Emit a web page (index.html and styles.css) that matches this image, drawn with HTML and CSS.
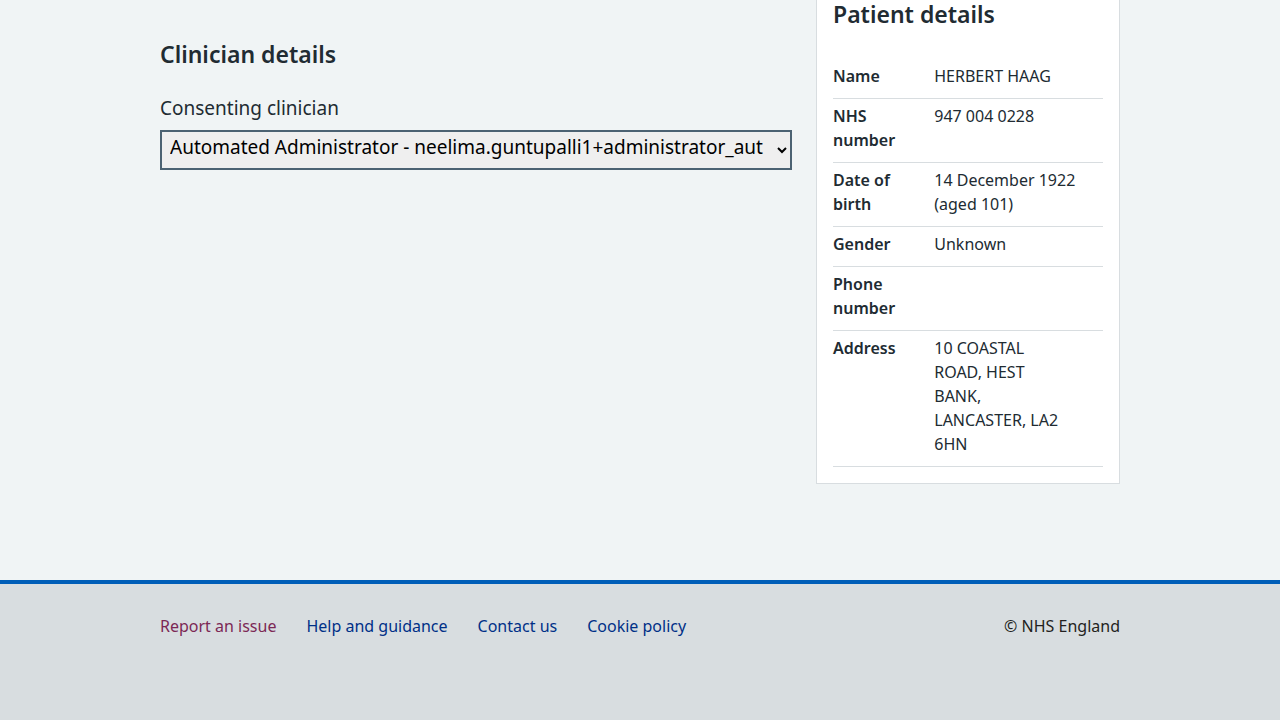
FILE: index.html
```html
<!DOCTYPE html>
<html lang="en">
<head>
<meta charset="utf-8">
<meta name="viewport" content="width=device-width, initial-scale=1">
<title>Clinician details</title>
<link rel="stylesheet" href="styles.css">
</head>
<body>
<main class="container main">
  <section class="clinician">
    <h2 class="heading">Clinician details</h2>
    <label class="label" for="clinician">Consenting clinician</label>
    <select class="select" id="clinician">
      <option>Automated Administrator - neelima.guntupalli1+administrator_aut</option>
    </select>
  </section>
  <aside class="card">
    <h2 class="heading card-heading">Patient details</h2>
    <dl class="summary">
      <div class="row"><dt>Name</dt><dd>HERBERT HAAG</dd></div>
      <div class="row"><dt>NHS number</dt><dd>947 004 0228</dd></div>
      <div class="row"><dt>Date of birth</dt><dd>14 December 1922 (aged 101)</dd></div>
      <div class="row"><dt>Gender</dt><dd>Unknown</dd></div>
      <div class="row"><dt>Phone number</dt><dd></dd></div>
      <div class="row"><dt>Address</dt><dd>10 COASTAL<br>ROAD, HEST<br>BANK,<br>LANCASTER, LA2<br>6HN</dd></div>
    </dl>
  </aside>
</main>
<footer class="footer">
  <div class="container footer-inner">
    <nav class="links" aria-label="Support links">
      <a class="visited" href="#report">Report an issue</a>
      <a href="#help">Help and guidance</a>
      <a href="#contact">Contact us</a>
      <a href="#cookies">Cookie policy</a>
    </nav>
    <p class="copyright">© NHS England</p>
  </div>
</footer>
</body>
</html>
```
FILE: styles.css
```css
*, *::before, *::after { box-sizing: border-box; }

body {
  margin: 0;
  min-height: 100vh;
  display: flex;
  flex-direction: column;
  background: #f0f4f5;
  color: #212b32;
  font-family: "Noto Sans", "Open Sans", sans-serif;
  font-size: 16px;
  line-height: 24px;
}

.container {
  width: 100%;
  max-width: 992px;
  margin: 0 auto;
  padding: 0 16px;
}

.main {
  display: grid;
  grid-template-columns: minmax(0, 632fr) minmax(0, 304fr);
  gap: 24px;
  align-items: start;
  padding-bottom: 96px;
}

.clinician { padding-top: 40px; }

.heading {
  margin: 0 0 24px;
  font-size: 23px;
  line-height: 28px;
  font-weight: 600;
}

.label {
  display: block;
  margin-bottom: 6px;
  font-size: 19px;
  line-height: 32px;
}

.select {
  display: block;
  width: 100%;
  height: 40px;
  padding: 0 4px 6px;
  border: 2px solid #4c6272;
  border-radius: 0;
  background-color: #efefef;
  color: #000;
  font-family: inherit;
  font-size: 19px;
}

.card {
  padding: 0 16px 16px;
  border: 1px solid #d8dde0;
  border-top: 0;
  background: #fff;
}

.card-heading { margin-bottom: 36px; }

.summary { margin: 0; }

.row {
  display: grid;
  grid-template-columns: 3fr 5fr;
  margin-bottom: 5px;
  padding-bottom: 10px;
  border-bottom: 1px solid #d8dde0;
}

.row:last-child { margin-bottom: 0; }

.row dt {
  padding-right: 24px;
  font-weight: 600;
}

.row dd {
  margin: 0;
  padding-right: 24px;
}

.footer {
  flex: 1;
  padding: 30px 0;
  border-top: 4px solid #005eb8;
  background: #d8dde0;
}

.footer-inner {
  display: flex;
  flex-wrap: wrap;
  justify-content: space-between;
  gap: 16px 30px;
}

.links {
  display: flex;
  flex-wrap: wrap;
  gap: 8px 30px;
}

.links a { color: #003087; text-decoration: none; }
.links a.visited { color: #7c2855; }

.copyright {
  margin: 0;
  color: #231f20;
}
```
